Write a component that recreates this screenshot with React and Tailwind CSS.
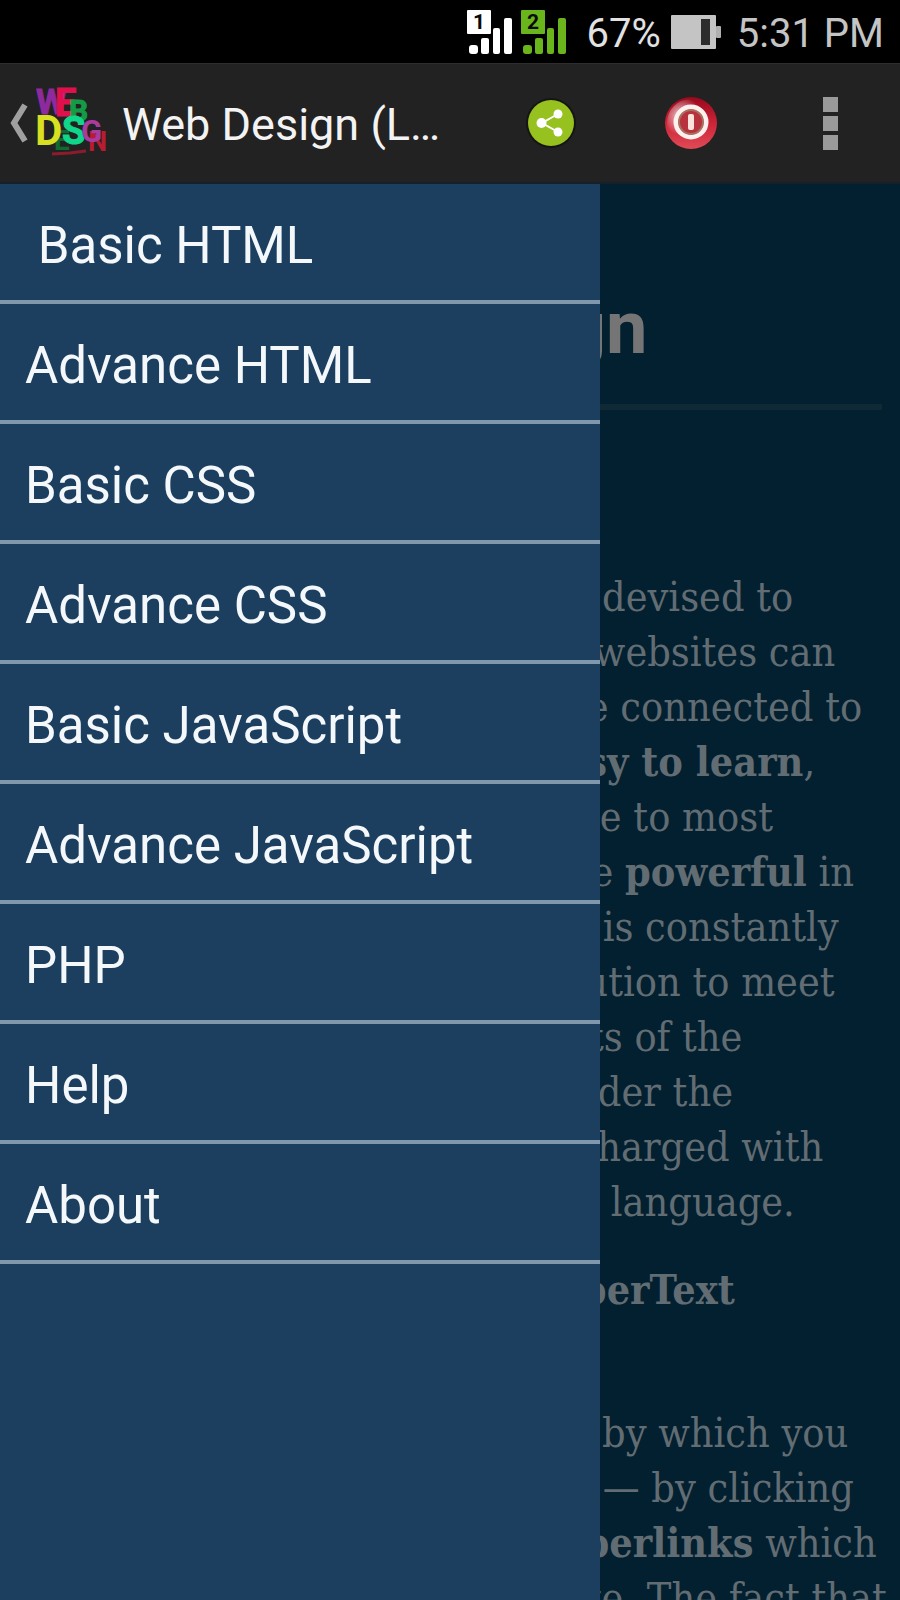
import React, { useState } from 'react';

const MENU_ITEMS = [
  '\u00a0Basic HTML',
  'Advance HTML',
  'Basic CSS',
  'Advance CSS',
  'Basic JavaScript',
  'Advance JavaScript',
  'PHP',
  'Help',
  'About',
];

const SignalIcon = ({ sim, className }) => (
  <svg viewBox="0 0 46 44" className={`w-[46px] h-11 ${className}`} fill="currentColor" aria-hidden="true">
    <rect x="0" y="0" width="24" height="24" rx="1" />
    <text x="12" y="19" textAnchor="middle" fontFamily="Roboto, sans-serif" fontSize="21" fontWeight="700" fill="#0a0a0a">
      {sim}
    </text>
    <rect x="2" y="35" width="9" height="9" rx="3" />
    <rect x="14" y="28" width="8" height="16" rx="2" />
    <rect x="26" y="18" width="7" height="26" rx="2" />
    <rect x="37" y="8" width="8" height="36" rx="2" />
  </svg>
);

const BatteryIcon = () => (
  <svg viewBox="0 0 50 34" className="w-[50px] h-[34px]" aria-hidden="true">
    <rect x="0" y="0" width="45" height="34" rx="1" fill="#c4c4c4" />
    <rect x="45" y="11" width="5" height="12" rx="1" fill="#b0b0b0" />
    <rect x="30" y="4" width="9" height="26" fill="#2c2c2c" />
  </svg>
);

const AppLogo = () => (
  <svg viewBox="0 -10 72 90" className="w-[72px] h-[90px]" fontFamily="Roboto, sans-serif" fontWeight="700" aria-hidden="true">
    <text x="0" y="26" fontSize="35" fill="#8e2a9e" stroke="#8e2a9e">W</text>
    <text x="19" y="28" fontSize="38" fill="#e0104e" stroke="#e0104e">E</text>
    <text x="33" y="33" fontSize="30" fill="#159a48" stroke="#159a48">B</text>
    <text x="18" y="62" fontSize="28" fill="#0f6a30">E</text>
    <text x="-1" y="57" fontSize="42" fill="#d8e021">D</text>
    <text x="26" y="56" fontSize="38" fill="#10d68a" stroke="#10d68a">S</text>
    <text x="52" y="63" fontSize="27" fill="#b81c30">N</text>
    <text x="45" y="54" fontSize="31" fill="#a83aa0">G</text>
    <path d="M16 66 L34 65 L50 63" stroke="#8c1c2c" strokeWidth="3" fill="none" />
  </svg>
);

const ShareIcon = () => (
  <svg viewBox="0 0 52 52" className="w-[52px] h-[52px]" aria-hidden="true">
    <circle cx="26" cy="26" r="25" fill="#151515" />
    <circle cx="26" cy="26" r="23" fill="#96c11f" />
    <path d="M33 17 L17 26 L33 35" stroke="#fff" strokeWidth="2" fill="none" />
    <circle cx="33" cy="17" r="4.5" fill="#fff" />
    <circle cx="16.5" cy="26" r="5" fill="#fff" />
    <circle cx="33" cy="35" r="4.5" fill="#fff" />
  </svg>
);

const PowerIcon = () => (
  <svg viewBox="0 0 52 52" className="w-[52px] h-[52px]" aria-hidden="true">
    <defs>
      <linearGradient id="power-bg" x1="0" y1="0" x2="0" y2="1">
        <stop offset="0" stopColor="#98081c" />
        <stop offset="0.5" stopColor="#cc2438" />
        <stop offset="1" stopColor="#e04a55" />
      </linearGradient>
      <radialGradient id="power-shine" cx="0.3" cy="0.35" r="0.4">
        <stop offset="0" stopColor="#fff" stopOpacity="0.8" />
        <stop offset="1" stopColor="#fff" stopOpacity="0" />
      </radialGradient>
    </defs>
    <circle cx="26" cy="26" r="26" fill="url(#power-bg)" />
    <circle cx="26" cy="26" r="24" fill="url(#power-shine)" />
    <circle cx="26" cy="25" r="15" fill="#b8323e" stroke="#fdf1ef" strokeWidth="5" />
    <circle cx="26" cy="25" r="12" fill="none" stroke="#a8705f" strokeWidth="2" />
    <rect x="23" y="17" width="6" height="16" rx="2" fill="#fbe3dc" />
  </svg>
);

const StatusBar = () => (
  <div className="h-[63px] shrink-0 bg-black flex items-center justify-end pr-4 text-[40px] leading-none">
    <SignalIcon sim="1" className="text-white" />
    <SignalIcon sim="2" className="ml-2 text-[#6ab41c]" />
    <span className="ml-5 pt-1 text-[#e2e2e2]">67%</span>
    <span className="ml-2.5">
      <BatteryIcon />
    </span>
    <span className="ml-4 pt-1 text-[#c4c4c4]">5:31 PM</span>
  </div>
);

const ActionBar = ({ onToggleMenu }) => (
  <header className="h-[121px] shrink-0 bg-[#222222] border-t border-[#2e2e2e] border-b-2 border-b-[#15202a] flex items-center pr-[52px]">
    <button
      type="button"
      onClick={onToggleMenu}
      aria-label="Toggle navigation menu"
      className="flex items-center gap-2 pl-2.5"
    >
      <svg viewBox="0 0 18 40" className="w-[18px] h-10" fill="none" stroke="#a0a0a0" strokeWidth="6" aria-hidden="true">
        <path d="M15 2 L4 20 L15 38" />
      </svg>
      <AppLogo />
    </button>
    <h1 className="ml-3.5 pt-1 flex-1 text-[45px] leading-[60px] text-[#f3f3f3]">Web Design (L…</h1>
    <button type="button" aria-label="Share">
      <ShareIcon />
    </button>
    <button type="button" aria-label="Exit" className="ml-[88px]">
      <PowerIcon />
    </button>
    <button type="button" aria-label="More options" className="ml-24 px-2.5 flex flex-col gap-1">
      <span className="w-[15px] h-[15px] bg-[#9a9a9a]" />
      <span className="w-[15px] h-[15px] bg-[#9a9a9a]" />
      <span className="w-[15px] h-[15px] bg-[#9a9a9a]" />
    </button>
  </header>
);

const Drawer = () => (
  <nav className="absolute inset-y-0 left-0 w-2/3 bg-[#1c3f60]">
    <ul>
      {MENU_ITEMS.map((item) => (
        <li key={item} className="border-b-4 border-[#8197ab]">
          <a href="#" className="flex items-center h-[116px] pl-[25px] pt-2 text-[51px] leading-[60px] text-[#f4f8fa]">
            {item}
          </a>
        </li>
      ))}
    </ul>
  </nav>
);

const Article = () => (
  <article className="pl-5 pr-[18px] pt-[102px] text-[#626c73] whitespace-nowrap font-['DejaVu_Serif_Condensed','DejaVu_Serif',serif] text-[41px] leading-[55px]">
    <h2 className="font-[Roboto,sans-serif] font-bold text-[74px] leading-[84px] text-center text-[#757575]">
      Web Design
    </h2>
    <hr className="mt-[34px] mb-40 border-0 h-1.5 bg-[#0f2a35]" />
    <p className="mb-[33px]">
      HTML is a computer language devised to
      <br />
      assist website creation. These websites can
      <br />
      now be viewed by anybody else connected to
      <br />
      the Internet. It is relatively <b>easy to learn</b>,
      <br />
      with the basics being accessible to most
      <br />
      anyone in one sitting; and quite <b>powerful</b> in
      <br />
      what it allows you to create. It is constantly
      <br />
      undergoing revisions and evolution to meet
      <br />
      new demands and requirements of the
      <br />
      changing Internet audience under the
      <br />
      W3C, the global organisation charged with
      <br />
      improving and maintaining the language.
    </p>
    <p className="mb-[33px] pl-[142px] font-bold">
      HTML stands for HyperText
      <br />
      Markup Language
    </p>
    <ul className="pl-[108px]">
      <li>
        HyperText is the method by which you
        <br />
        move around on the web — by clicking
        <br />
        on special text called <b>hyperlinks</b> which
        <br />
        bring you to the next page. The fact that
      </li>
    </ul>
  </article>
);

const App = () => {
  const [menuOpen, setMenuOpen] = useState(true);

  return (
    <div className="h-screen flex flex-col overflow-hidden bg-[#02202f] font-[Roboto,sans-serif]">
      <StatusBar />
      <ActionBar onToggleMenu={() => setMenuOpen(!menuOpen)} />
      <main className="relative flex-1 min-h-0 overflow-hidden">
        <Article />
        {menuOpen && <Drawer />}
      </main>
    </div>
  );
};

export default App;
